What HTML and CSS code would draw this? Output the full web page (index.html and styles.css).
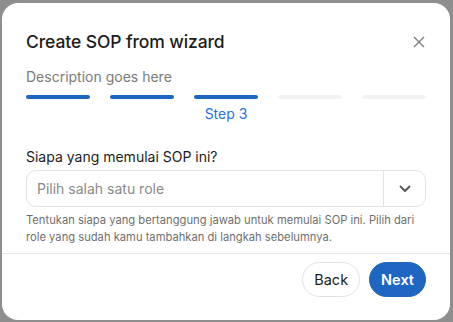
FILE: index.html
```html
<!DOCTYPE html>
<html lang="en">
<head>
    <meta charset="UTF-8">
    <meta name="viewport" content="width=device-width, initial-scale=1.0">
    <title>Create SOP from wizard</title>
    <link rel="stylesheet" href="styles.css">
</head>
<body>
    <div class="modal">
        <div class="modal-body">
            <div class="modal-header">
                <h1>Create SOP from wizard</h1>
                <button class="close" type="button" aria-label="Close">
                    <svg width="12" height="12" viewBox="0 0 12 12"><path d="M1 1L11 11M11 1L1 11" stroke="#7a7a7a" stroke-width="1.3" fill="none"/></svg>
                </button>
            </div>
            <p class="description">Description goes here</p>

            <div class="steps">
                <div class="step done"></div>
                <div class="step done"></div>
                <div class="step done current"><span>Step 3</span></div>
                <div class="step"></div>
                <div class="step"></div>
            </div>

            <label class="field-label" for="role">Siapa yang memulai SOP ini?</label>
            <div class="select" id="role">
                <span class="placeholder">Pilih salah satu role</span>
                <span class="arrow">
                    <svg width="12" height="8" viewBox="0 0 12 8"><path d="M1.5 1.5L6 6L10.5 1.5" stroke="#555" stroke-width="1.8" fill="none" stroke-linecap="round" stroke-linejoin="round"/></svg>
                </span>
            </div>
            <p class="help">Tentukan siapa yang bertanggung jawab untuk memulai SOP ini. Pilih dari role yang sudah kamu tambahkan di langkah sebelumnya.</p>
        </div>

        <div class="modal-footer">
            <button type="button" class="btn btn-outline">Back</button>
            <button type="button" class="btn btn-primary">Next</button>
        </div>
    </div>
</body>
</html>
```

FILE: styles.css
```css
body {
    font-family: "Inter", "Noto Sans", sans-serif;
    margin: 0;
    padding: 3px 3px 0 2px;
    background-color: #8e8e8e;
    height: 322px;
    box-sizing: border-box;
    overflow: hidden;
}

.modal {
    background: white;
    border-radius: 16px;
    height: 317px;
    display: flex;
    flex-direction: column;
}

.modal-body {
    padding: 27px 24px 0 24px;
}

.modal-header {
    display: flex;
    justify-content: space-between;
    align-items: center;
}

h1 {
    margin: 0;
    font-size: 17.5px;
    font-weight: 500;
    color: #1c1c1c;
    letter-spacing: -0.1px;
    line-height: 24px;
}

.close {
    border: none;
    background: none;
    padding: 0;
    margin-right: 1px;
    width: 12px;
    height: 12px;
    display: flex;
    cursor: pointer;
}

.description {
    margin: 13px 0 0;
    font-size: 14px;
    color: #7b7b7b;
    line-height: 20px;
}

.steps {
    display: flex;
    gap: 20px;
    margin-top: 8px;
    height: 40px;
}

.step {
    flex: 1;
    height: 3.5px;
    border-radius: 2px;
    background-color: #f2f2f2;
    position: relative;
}

.step.done {
    background-color: #1f66c1;
}

.step span {
    position: absolute;
    top: 9px;
    left: 0;
    right: 0;
    text-align: center;
    font-size: 14px;
    color: #2a72d4;
    line-height: 20px;
}

.field-label {
    display: block;
    margin-top: 12px;
    font-size: 14px;
    color: #1c1c1c;
    line-height: 20px;
}

.select {
    margin-top: 3px;
    height: 37px;
    border: 1px solid #e3e3e3;
    border-radius: 10px;
    display: flex;
    align-items: stretch;
    box-sizing: border-box;
}

.placeholder {
    flex: 1;
    display: flex;
    align-items: center;
    padding-left: 10px;
    font-size: 14px;
    color: #8a8a8a;
}

.arrow {
    width: 41px;
    border-left: 1px solid #e3e3e3;
    display: flex;
    align-items: center;
    justify-content: center;
}

.help {
    margin: 5px 0 0;
    font-size: 11.2px;
    line-height: 17px;
    color: #6f6f6f;
}

.modal-footer {
    margin-top: 7px;
    border-top: 1px solid #e6e6e6;
    display: flex;
    justify-content: flex-end;
    gap: 9px;
    padding: 8px 24px 0;
}

.btn {
    height: 35px;
    padding: 0 11px;
    border-radius: 18px;
    font-family: inherit;
    font-size: 14.5px;
    cursor: pointer;
}

.btn-outline {
    background: white;
    border: 1px solid #e3e3e3;
    color: #1c1c1c;
}

.btn-primary {
    background-color: #1f66c1;
    border: 1px solid #1f66c1;
    color: white;
    font-weight: 600;
}
```
